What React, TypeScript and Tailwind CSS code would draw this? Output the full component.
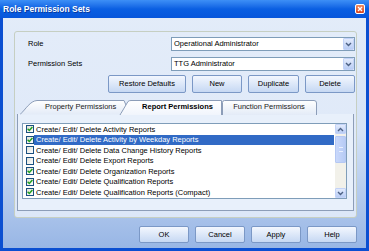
import React from 'react'

const items = [
  { label: 'Create/ Edit/ Delete Activity Reports', checked: true },
  { label: 'Create/ Edit/ Delete Activity by Weekday Reports', checked: true, selected: true },
  { label: 'Create/ Edit/ Delete Data Change History Reports', checked: false },
  { label: 'Create/ Edit/ Delete Export Reports', checked: false },
  { label: 'Create/ Edit/ Delete Organization Reports', checked: true },
  { label: 'Create/ Edit/ Delete Qualification Reports', checked: true },
  { label: 'Create/ Edit/ Delete Qualification Reports (Compact)', checked: true },
]

function Button({ label, w }: { label: string; w: string }) {
  return (
    <div
      className={`${w} h-full flex items-center justify-center rounded-[2px] border border-[#7b98c6] bg-linear-to-b from-[#f3f7fe] to-[#c6d8f3] text-black`}
    >
      {label}
    </div>
  )
}

function Chevron({ up = false }: { up?: boolean }) {
  return (
    <svg width="7" height="5" viewBox="0 0 7 5" className={up ? 'rotate-180' : ''}>
      <path d="M1 1 L3.5 3.5 L6 1" fill="none" stroke="#4d6185" strokeWidth="1.4" />
    </svg>
  )
}

function Select({ value }: { value: string }) {
  return (
    <div className="w-[184px] h-[14px] flex items-center border border-[#7f9db9] bg-white">
      <span className="flex-1 pl-[2px] text-black">{value}</span>
      <div className="w-[11px] h-[12px] flex items-center justify-center rounded-[1px] bg-linear-to-b from-[#e3ebfc] to-[#b9cdf5] border border-[#c3d3f8]">
        <Chevron />
      </div>
    </div>
  )
}

function CheckBox({ checked }: { checked: boolean }) {
  return (
    <div className="w-[8px] h-[8px] shrink-0 border border-[#1c5180] bg-linear-to-br from-[#e0e0d8] to-white flex items-center justify-center">
      {checked && (
        <svg width="6" height="6" viewBox="0 0 6 6">
          <path d="M0.6 2.8 L2.3 4.5 L5.4 1" fill="none" stroke="#21a121" strokeWidth="1.5" />
        </svg>
      )}
    </div>
  )
}

function Tabs() {
  return (
    <div className="relative h-[14px] ml-[3px]">
      <svg className="absolute inset-0" width="340" height="15" viewBox="0 0 340 15">
        <defs>
          <linearGradient id="tabIn" x1="0" y1="0" x2="0" y2="1">
            <stop offset="0" stopColor="#ffffff" />
            <stop offset="1" stopColor="#e3ebf7" />
          </linearGradient>
          <linearGradient id="tabAct" x1="0" y1="0" x2="0" y2="1">
            <stop offset="0" stopColor="#ffffff" />
            <stop offset="1" stopColor="#f1f5fc" />
          </linearGradient>
        </defs>
        {/* function tab */}
        <path d="M202.5 15 V2.5 Q202.5 0.5 204.5 0.5 H294 Q296.5 0.5 296.5 3 V15" fill="url(#tabIn)" stroke="#8c9db8" />
        {/* property tab */}
        <path d="M0 14.5 C6 9 10 1 17 0.5 H104 L110 14.5" fill="url(#tabIn)" stroke="#8c9db8" />
        {/* report tab (active) */}
        <path d="M100 15 L108 1.5 Q109 0.5 111 0.5 H201.5 V15" fill="url(#tabAct)" stroke="#8c9db8" />
        <path d="M101 14.5 H201" stroke="#f1f5fc" strokeWidth="1.5" />
      </svg>
      <div className="relative flex h-full items-center">
        <span className="w-[113px] pl-[25px] text-[#1a1a1a]">Property Permissions</span>
        <span className="w-[89px] text-center font-bold text-black">Report Permissions</span>
        <span className="w-[94px] text-center text-[#1a1a1a]">Function Permissions</span>
      </div>
    </div>
  )
}

export default function App() {
  return (
    <div className="w-[369px] h-[251px] flex flex-col bg-[#0b4fd1] font-['Liberation_Sans',Arial,sans-serif] text-[7.5px] leading-none overflow-hidden">
      <div className="h-[18px] shrink-0 flex items-center justify-between pl-[3px] pr-[4px] bg-linear-to-b from-[#3d8ff6] via-[#0a5fe2] to-[#0756db]">
        <span className="text-white font-bold text-[8.5px] [text-shadow:1px_1px_0_#0a3a9c]">Role Permission Sets</span>
        <div className="w-[10px] h-[10px] rounded-[2px] border border-white bg-linear-to-b from-[#f08a5e] to-[#d8421c] flex items-center justify-center">
          <svg width="6" height="6" viewBox="0 0 6 6">
            <path d="M1 1 L5 5 M5 1 L1 5" stroke="white" strokeWidth="1.3" />
          </svg>
        </div>
      </div>

      <div className="flex-1 mx-[3px] mb-[3px] flex flex-col pl-[11px] pr-[9px] pt-[13px] bg-linear-to-b from-[#e3ecf9] via-[#d4e2f6] to-[#98b6e5]">
        <div className="h-[187px] shrink-0 flex flex-col rounded-[3px] border border-[#c6cfc2] bg-linear-to-b from-[#e3ecf9] to-[#dce7f8] pt-[5px] pl-[2px] pr-[1px]">
          <div className="flex items-center justify-between pl-[11px]">
            <span className="text-black">Role</span>
            <Select value="Operational Administrator" />
          </div>
          <div className="mt-[6px] flex items-center justify-between pl-[11px]">
            <span className="text-black">Permission Sets</span>
            <Select value="TTG Administrator" />
          </div>
          <div className="mt-[4px] h-[18px] flex justify-end gap-[6px]">
            <Button label="Restore Defaults" w="w-[78px]" />
            <Button label="New" w="w-[50px]" />
            <Button label="Duplicate" w="w-[51px]" />
            <Button label="Delete" w="w-[50px]" />
          </div>

          <div className="mt-[7px]">
            <Tabs />
          </div>
          <div className="h-[97px] mr-[1px] flex flex-col border border-t-0 border-[#8c9db8] bg-[#e8f0fb] pl-[4px] pr-[6px] pt-[9px]">
            <div className="h-[76px] flex border border-[#7f9db9] bg-white">
              <div className="flex-1 flex flex-col">
                {items.map((it) => (
                  <div key={it.label} className="h-[10.5px] flex items-center pl-[3px]">
                    <CheckBox checked={it.checked} />
                    <span
                      className={`flex-1 h-full flex items-center pl-[2px] ${
                        it.selected ? 'bg-[#316ac5] text-white' : 'text-black'
                      }`}
                    >
                      {it.label}
                    </span>
                  </div>
                ))}
              </div>
              <div className="w-[11px] ml-[1px] flex flex-col bg-[#f2f1ea]">
                <div className="h-[10px] flex items-center justify-center rounded-[1px] border border-[#c3d3f8] bg-linear-to-b from-[#e3ebfc] to-[#b9cdf5]">
                  <Chevron up />
                </div>
                <div className="h-[27px] mt-[2px] flex items-center justify-center rounded-[1px] border border-[#b5c8f3] bg-linear-to-r from-[#c9d8fb] to-[#b7cbf5]">
                  <div className="w-[4px] h-[5px] border-y border-[#e9f0fe]" />
                </div>
                <div className="flex-1" />
                <div className="h-[10px] flex items-center justify-center rounded-[1px] border border-[#c3d3f8] bg-linear-to-b from-[#e3ebfc] to-[#b9cdf5]">
                  <Chevron />
                </div>
              </div>
            </div>
          </div>
        </div>

        <div className="mt-[8px] h-[17px] flex justify-end gap-[6px]">
          <Button label="OK" w="w-[50px]" />
          <Button label="Cancel" w="w-[50px]" />
          <Button label="Apply" w="w-[50px]" />
          <Button label="Help" w="w-[50px]" />
        </div>
      </div>
    </div>
  )
}
